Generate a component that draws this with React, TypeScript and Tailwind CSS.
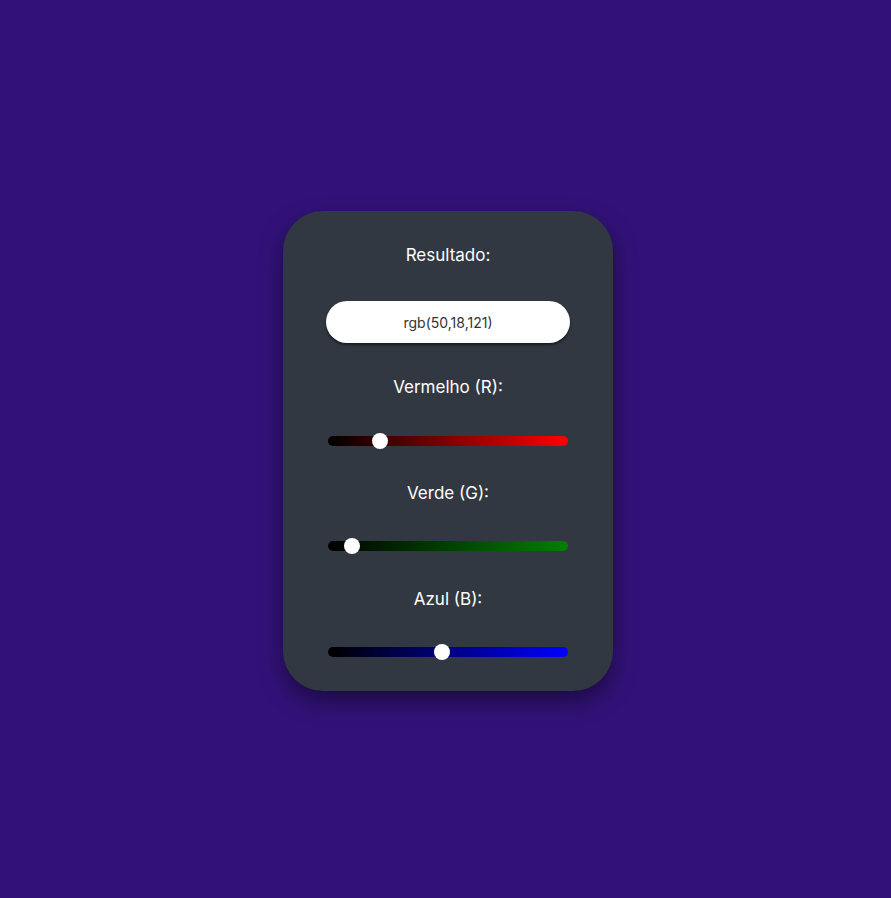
import React from "react";

const font = { fontFamily: "Inter, 'Open Sans', sans-serif" };

function Slider({ value, from, to }: { value: number; from: string; to: string }) {
  const pct = value / 255;
  return (
    <div
      className="relative h-[10px] w-[240px] rounded-full"
      style={{ background: `linear-gradient(to right, ${from}, ${to})` }}
    >
      <div
        className="absolute top-1/2 h-[16px] w-[16px] -translate-y-1/2 rounded-full bg-white"
        style={{ left: `${pct * (240 - 16)}px` }}
      />
    </div>
  );
}

export default function App() {
  return (
    <div
      className="flex min-h-screen w-full items-center justify-center bg-[#321279]"
      style={font}
    >
      <div className="ml-[5px] mt-[4px] flex h-[480px] w-[330px] flex-col items-center rounded-[40px] bg-[#323841] pt-[32px] shadow-[0_10px_25px_rgba(0,0,0,0.45)]">
        <p className="h-[24px] text-[17px] leading-[24px] text-white">Resultado:</p>
        <div className="mt-[34px] flex h-[42px] w-[244px] items-center justify-center rounded-full bg-white text-[14px] text-[#333] shadow-[0_2px_3px_rgba(0,0,0,0.5)]">
          rgb(50,18,121)
        </div>
        <p className="mt-[32px] h-[24px] text-[17px] leading-[24px] text-white">Vermelho (R):</p>
        <div className="mt-[37px]">
          <Slider value={50} from="#000000" to="#ff0000" />
        </div>
        <p className="mt-[35px] h-[24px] text-[17px] leading-[24px] text-white">Verde (G):</p>
        <div className="mt-[36px]">
          <Slider value={18} from="#000000" to="#008000" />
        </div>
        <p className="mt-[36px] h-[24px] text-[17px] leading-[24px] text-white">Azul (B):</p>
        <div className="mt-[36px]">
          <Slider value={121} from="#000000" to="#0000ff" />
        </div>
      </div>
    </div>
  );
}
